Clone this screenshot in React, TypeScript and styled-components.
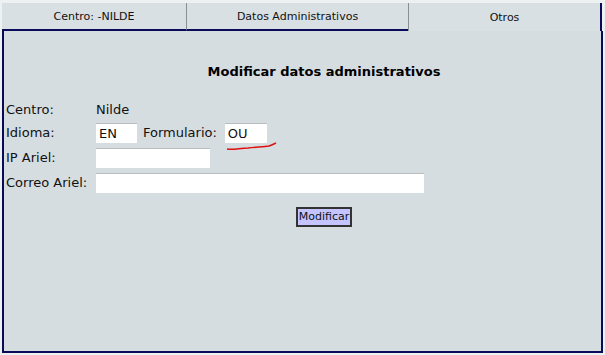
import styled, { createGlobalStyle } from "styled-components";

const GlobalStyle = createGlobalStyle`
    body {
        margin: 0;
        background: #eef1f2;
        font-family: "DejaVu Sans", Verdana, sans-serif;
    }
`;

export default function App() {
    return (
        <>
            <GlobalStyle />
            <Page>
                <TabBar>
                    <Tab $width={184}>Centro: -NILDE</Tab>
                    <Tab $width={222} $divider>Datos Administrativos</Tab>
                    <Tab $width={194} $active $divider>Otros</Tab>
                </TabBar>
                <Panel>
                    <Heading>Modificar datos administrativos</Heading>
                    <Form>
                        <Row $height={17} $bottom>
                            <Label>Centro:</Label>
                            <Value>Nilde</Value>
                        </Row>
                        <Row>
                            <Label>Idioma:</Label>
                            <Input $width={41} defaultValue="EN" />
                            <InlineLabel>Formulario:</InlineLabel>
                            <Spell>
                                <Input $width={42} defaultValue="OU" />
                                <Squiggle width="52" height="10" viewBox="0 0 52 10">
                                    <path
                                        d="M1 7 C8 8 14 6 22 6 C30 5 38 5 43 4 C46 3 48 2 50 1"
                                        fill="none"
                                        stroke="#e01010"
                                        strokeWidth="1.6"
                                    />
                                </Squiggle>
                            </Spell>
                        </Row>
                        <Row>
                            <Label>IP Ariel:</Label>
                            <Input $width={114} />
                        </Row>
                        <Row>
                            <Label>Correo Ariel:</Label>
                            <Input $width={328} />
                        </Row>
                    </Form>
                    <Actions>
                        <Button>Modificar</Button>
                    </Actions>
                </Panel>
            </Page>
        </>
    );
}

const Page = styled.div`
    width: 601px;
    padding: 3px 0 0 2px;
`;

const TabBar = styled.div`
    display: flex;
    height: 28px;
`;

const Tab = styled.div<{ $width: number; $active?: boolean; $divider?: boolean }>`
    width: ${(p) => p.$width}px;
    box-sizing: border-box;
    display: flex;
    align-items: center;
    justify-content: center;
    background: #d9e0e3;
    color: #111;
    font-size: 11px;
    border-left: ${(p) => (p.$divider ? "1px solid #8a8f93" : "none")};
    border-right: ${(p) => (p.$active ? "2px solid #0a0a5a" : "none")};
    border-bottom: ${(p) => (p.$active ? "none" : "2px solid #0a0a5a")};
    padding-top: 1px;
`;

const Panel = styled.div`
    width: 601px;
    height: 322px;
    box-sizing: border-box;
    background: #d6dde0;
    border: 2px solid #0a0a5a;
    border-top: none;
    padding: 33px 3px 0 2px;
`;

const Heading = styled.h2`
    margin: 0 0 22px 0;
    text-align: center;
    font-size: 13px;
    font-weight: bold;
    color: #000;
    padding-left: 44px;
`;

const Form = styled.div`
    display: flex;
    flex-direction: column;
    gap: 5px;
`;

const Row = styled.div<{ $height?: number; $bottom?: boolean }>`
    display: flex;
    align-items: ${(p) => (p.$bottom ? "flex-end" : "center")};
    height: ${(p) => p.$height ?? 20}px;
    line-height: 16px;
    font-size: 13px;
    color: #111;
`;

const Label = styled.span`
    width: 90px;
    flex: none;
`;

const Value = styled.span``;

const InlineLabel = styled.span`
    margin: 0 8px 0 6px;
`;

const Spell = styled.span`
    position: relative;
    display: inline-flex;
`;

const Squiggle = styled.svg`
    position: absolute;
    left: 1px;
    top: 19px;
`;

const Input = styled.input<{ $width: number }>`
    width: ${(p) => p.$width}px;
    height: 20px;
    box-sizing: border-box;
    border: none;
    border-top: 1px solid #b8bcbf;
    background: #fff;
    font-family: "DejaVu Sans", Verdana, sans-serif;
    font-size: 13px;
    color: #111;
    padding: 0 3px;
    outline: none;
`;

const Actions = styled.div`
    display: flex;
    justify-content: center;
    padding-left: 44px;
    margin-top: 14px;
`;

const Button = styled.button`
    background: #c4c4ff;
    border: 2px solid #333;
    color: #111;
    font-family: "DejaVu Sans", Verdana, sans-serif;
    font-size: 11px;
    padding: 1px 1px 2px;
    height: 20px;
`;
